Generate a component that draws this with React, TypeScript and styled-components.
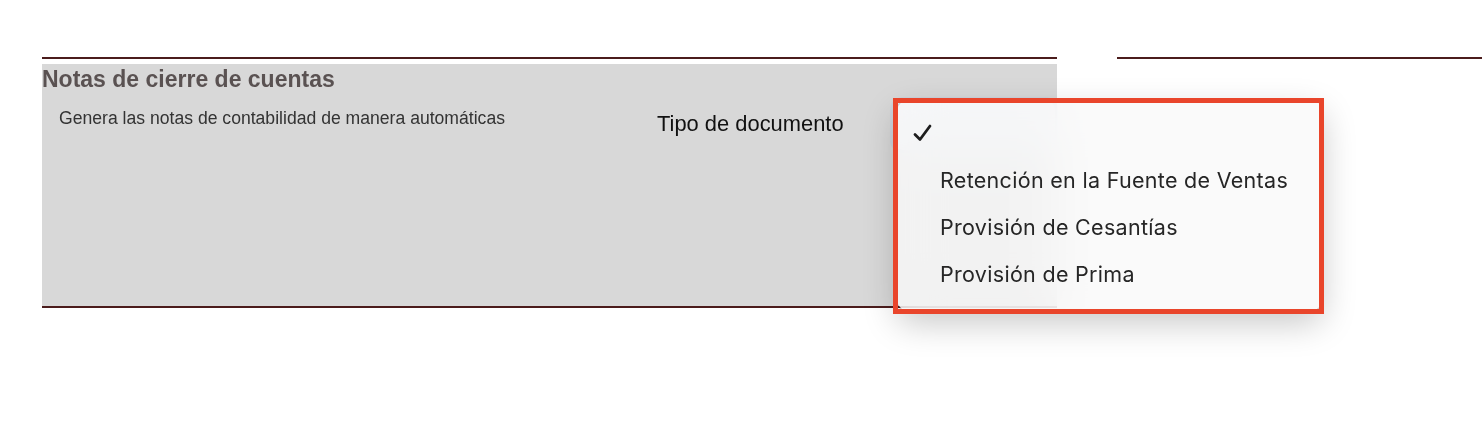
import styled, { createGlobalStyle } from "styled-components";

const GlobalStyle = createGlobalStyle`
  html, body {
    margin: 0;
    padding: 0;
    background: #ffffff;
    font-family: "Liberation Sans", Arial, sans-serif;
  }
`;

const Page = styled.div`
  display: flex;
  gap: 60px;
  width: 1482px;
  padding: 57px 0 0 42px;
  box-sizing: border-box;
  overflow: hidden;
  height: 430px;
`;

const Section = styled.section`
  width: 1015px;
  flex-shrink: 0;
  border-top: 2px solid #4b1c1c;
  border-bottom: 2px solid #4b1c1c;
  padding-top: 5px;
  align-self: flex-start;
`;

const Aside = styled.aside`
  flex: 1;
  border-top: 2px solid #4b1c1c;
  align-self: flex-start;
`;

const Panel = styled.div`
  background: #d8d8d8;
  height: 242px;
  padding-top: 3px;
  box-sizing: border-box;
`;

const Title = styled.h3`
  margin: 0;
  font-size: 23px;
  line-height: 25px;
  font-weight: 700;
  color: #5a5252;
`;

const Row = styled.div`
  display: flex;
  align-items: flex-start;
  margin-top: 8px;
  padding-left: 17px;
`;

const Description = styled.p`
  margin: 0;
  width: 598px;
  padding-top: 8px;
  font-size: 17.6px;
  line-height: 20px;
  color: #333333;
`;

const Label = styled.span`
  width: 236px;
  font-size: 21.9px;
  line-height: 48px;
  color: #111111;
`;

const SelectWrap = styled.div`
  position: relative;
  width: 162px;
  height: 50px;
`;

const SelectBox = styled.div`
  width: 100%;
  height: 100%;
  border-radius: 10px;
  background: #e9edf2;
  box-shadow: 0 0 0 3px rgba(170, 195, 230, 0.25);
`;

const Menu = styled.ul`
  position: absolute;
  left: 4px;
  top: 0;
  width: 425px;
  margin: 0;
  padding: 9px 0 14px;
  list-style: none;
  border-radius: 12px;
  background: rgba(249, 249, 249, 0.8);
  backdrop-filter: blur(24px) saturate(1.3);
  box-shadow: 0 0 0 1px rgba(0, 0, 0, 0.12), 0 12px 34px rgba(0, 0, 0, 0.22);
  box-sizing: border-box;
`;

const Option = styled.li`
  display: grid;
  grid-template-columns: 43px 1fr;
  align-items: center;
  height: 47px;
  font-family: Inter, "Noto Sans", sans-serif;
  font-size: 21.5px;
  letter-spacing: 0.3px;
  color: #262626;
`;

const CheckSlot = styled.span`
  display: flex;
  padding-left: 16px;
`;

const Highlight = styled.div`
  position: absolute;
  left: 0;
  top: -2px;
  width: 431px;
  height: 216px;
  border: 5px solid #e9452b;
  box-sizing: border-box;
  pointer-events: none;
`;

const options = [
  { label: "", selected: true },
  { label: "Retención en la Fuente de Ventas", selected: false },
  { label: "Provisión de Cesantías", selected: false },
  { label: "Provisión de Prima", selected: false },
];

function Check() {
  return (
    <svg width="19" height="18" viewBox="0 0 19 18" fill="none">
      <path
        d="M2 10.5 L7 15.5 L17 2"
        stroke="#1e1e1e"
        strokeWidth="2.8"
        strokeLinecap="round"
        strokeLinejoin="round"
      />
    </svg>
  );
}

export default function App() {
  return (
    <>
      <GlobalStyle />
      <Page>
        <Section>
          <Panel>
            <Title>Notas de cierre de cuentas</Title>
            <Row>
              <Description>
                Genera las notas de contabilidad de manera automáticas
              </Description>
              <Label>Tipo de documento</Label>
              <SelectWrap>
                <SelectBox />
                <Menu>
                  {options.map((o, i) => (
                    <Option key={i}>
                      <CheckSlot>{o.selected && <Check />}</CheckSlot>
                      <span>{o.label}</span>
                    </Option>
                  ))}
                </Menu>
                <Highlight />
              </SelectWrap>
            </Row>
          </Panel>
        </Section>
        <Aside />
      </Page>
    </>
  );
}
